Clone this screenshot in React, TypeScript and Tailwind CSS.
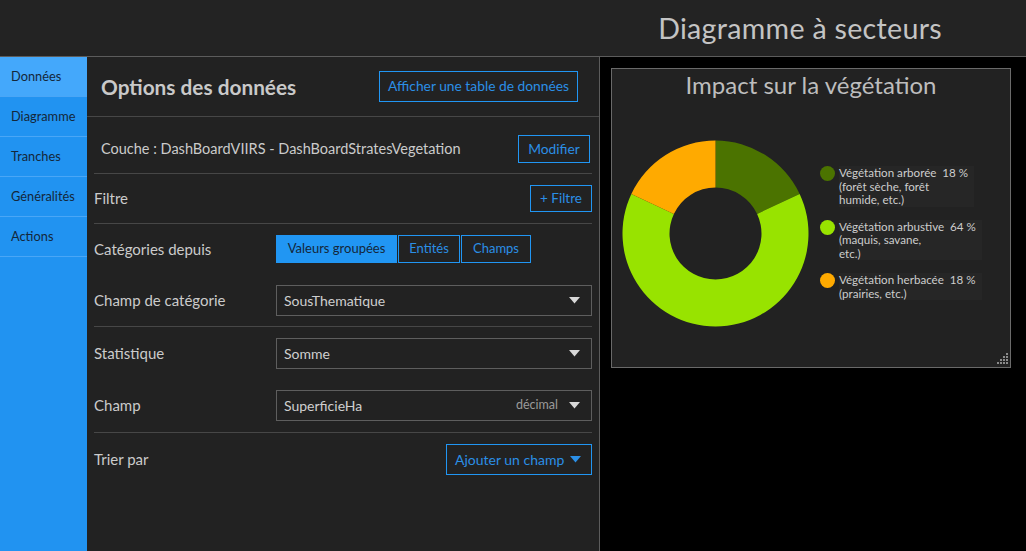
import React from "react";

const font = { fontFamily: "Lato, 'Open Sans', sans-serif" };

function Caret({ color = "#d8d8d8" }: { color?: string }) {
  return (
    <svg width="11" height="7" viewBox="0 0 11 7" className="shrink-0">
      <path d="M0 0 L11 0 L5.5 6.5 Z" fill={color} />
    </svg>
  );
}

function Select({ value, hint }: { value: string; hint?: string }) {
  return (
    <div className="flex h-[31px] w-[316px] items-center border border-[#5e5e5e] pl-[7px] pr-[11px]">
      <span className="flex-1 text-[14px] text-[#cfcfcf]">{value}</span>
      {hint && <span className="mr-[11px] text-[12.5px] text-[#9a9a9a]">{hint}</span>}
      <Caret />
    </div>
  );
}

function polar(cx: number, cy: number, r: number, frac: number) {
  const a = frac * Math.PI * 2;
  return [cx + r * Math.sin(a), cy - r * Math.cos(a)];
}

function arc(cx: number, cy: number, ro: number, ri: number, f0: number, f1: number) {
  const [x0, y0] = polar(cx, cy, ro, f0);
  const [x1, y1] = polar(cx, cy, ro, f1);
  const [x2, y2] = polar(cx, cy, ri, f1);
  const [x3, y3] = polar(cx, cy, ri, f0);
  const large = f1 - f0 > 0.5 ? 1 : 0;
  return `M${x0} ${y0} A${ro} ${ro} 0 ${large} 1 ${x1} ${y1} L${x2} ${y2} A${ri} ${ri} 0 ${large} 0 ${x3} ${y3} Z`;
}

function Donut() {
  const cx = 93.5, cy = 93.5, ro = 93, ri = 46;
  return (
    <svg width="187" height="187" viewBox="0 0 187 187" className="shrink-0">
      <path d={arc(cx, cy, ro, ri, 0, 0.18)} fill="#4b7300" />
      <path d={arc(cx, cy, ro, ri, 0.18, 0.82)} fill="#98e300" />
      <path d={arc(cx, cy, ro, ri, 0.82, 0.99999)} fill="#ffaa00" />
    </svg>
  );
}

function LegendItem({ color, lines, pct }: { color: string; lines: string[]; pct: string }) {
  return (
    <div className="flex items-start">
      <span className="mt-[0px] h-[15px] w-[15px] shrink-0 rounded-full" style={{ backgroundColor: color }} />
      <div className="ml-[4px] bg-[#262626] pr-[6px] text-[11.6px] leading-[13.5px] text-[#cdcdcd]">
        <div className="whitespace-pre">{lines[0] + "  " + pct}</div>
        {lines.slice(1).map((l) => (
          <div key={l}>{l}</div>
        ))}
      </div>
    </div>
  );
}

export default function App() {
  const navItems = ["Données", "Diagramme", "Tranches", "Généralités", "Actions"];
  return (
    <div className="flex h-[551px] w-[1026px] flex-col overflow-hidden bg-[#222222]" style={font}>
      <header className="flex h-[57px] shrink-0 items-center justify-end border-b border-[#5c5c5c] bg-[#232323] pr-[84px]">
        <h1 className="text-[28.6px] font-normal tracking-[0.3px] text-[#c4c4c4]">Diagramme à secteurs</h1>
      </header>
      <div className="flex min-h-0 flex-1">
        <nav className="flex w-[87px] shrink-0 flex-col bg-[#2193f1]">
          {navItems.map((n, i) => (
            <div
              key={n}
              className={
                "flex h-[40px] items-center border-b border-[#4aa6f6] pl-[11px] text-[12.8px] text-[#14273a] " +
                (i === 0 ? "bg-[#44a8fb]" : "")
              }
            >
              {n}
            </div>
          ))}
        </nav>
        <section className="flex w-[513px] shrink-0 flex-col border-r border-[#5c5c5c] bg-[#222222]">
          <div className="flex h-[60px] shrink-0 items-center justify-between border-b border-[#474747] pl-[14px] pr-[21px]">
            <h2 className="text-[20.8px] font-bold text-[#c9c9c9]">Options des données</h2>
            <button className="h-[31px] border border-[#2196f3] px-[8px] text-[13.8px] text-[#2b8fe6]">
              Afficher une table de données
            </button>
          </div>
          <div className="mx-[7px] flex flex-col">
            <div className="flex h-[57px] items-center justify-between border-b border-[#474747] pt-[8px] pl-[7px] pr-[2px]">
              <span className="text-[14.5px] text-[#cbcbcb]">Couche : DashBoardVIIRS - DashBoardStratesVegetation</span>
              <button className="h-[28px] w-[72px] border border-[#2196f3] text-[13.8px] text-[#2b8fe6]">Modifier</button>
            </div>
            <div className="flex h-[50px] items-center justify-between border-b border-[#474747]">
              <span className="text-[15px] text-[#cbcbcb]">Filtre</span>
              <button className="h-[27px] w-[62px] border border-[#2196f3] text-[13.5px] text-[#2b8fe6]">+ Filtre</button>
            </div>
            <div className="flex h-[50px] items-center">
              <span className="w-[182px] text-[15px] text-[#cbcbcb]">Catégories depuis</span>
              <div className="flex h-[28px]">
                <button className="h-full w-[121px] bg-[#2196f3] text-[13px] text-[#14273a]">Valeurs groupées</button>
                <button className="ml-[1px] h-full w-[62px] border border-[#2196f3] text-[13px] text-[#2b8fe6]">Entités</button>
                <button className="ml-[1px] h-full w-[70px] border border-[#2196f3] text-[13px] text-[#2b8fe6]">Champs</button>
              </div>
            </div>
            <div className="flex h-[53px] items-center border-b border-[#474747]">
              <span className="w-[182px] text-[15px] text-[#cbcbcb]">Champ de catégorie</span>
              <Select value="SousThematique" />
            </div>
            <div className="flex h-[52px] items-center">
              <span className="w-[182px] text-[15px] text-[#cbcbcb]">Statistique</span>
              <Select value="Somme" />
            </div>
            <div className="flex h-[54px] items-center border-b border-[#474747]">
              <span className="w-[182px] text-[15px] text-[#cbcbcb]">Champ</span>
              <Select value="SuperficieHa" hint="décimal" />
            </div>
            <div className="flex h-[53px] items-center justify-between">
              <span className="text-[15px] text-[#cbcbcb]">Trier par</span>
              <button className="flex h-[31px] w-[146px] items-center justify-between border border-[#2196f3] pl-[8px] pr-[10px] text-[14px] text-[#2b8fe6]">
                <span>Ajouter un champ</span>
                <Caret color="#2b8fe6" />
              </button>
            </div>
          </div>
        </section>
        <main className="flex-1 bg-black pl-[11px] pt-[11px]">
          <div className="relative flex h-[300px] w-[400px] flex-col border border-[#6a6a6a] bg-[#222222]">
            <div className="h-[32px] text-center text-[24px] leading-[32px] text-[#bdbdbd]">Impact sur la végétation</div>
            <div className="flex items-start">
              <div className="ml-[10px] mt-[39px]">
                <Donut />
              </div>
              <div className="ml-[11px] mt-[65px] flex flex-col gap-[13px]">
                <LegendItem color="#4b7300" pct="18 %" lines={["Végétation arborée", "(forêt sèche, forêt", "humide, etc.)"]} />
                <LegendItem color="#98e300" pct="64 %" lines={["Végétation arbustive", "(maquis, savane,", "etc.)"]} />
                <LegendItem color="#ffaa00" pct="18 %" lines={["Végétation herbacée", "(prairies, etc.)"]} />
              </div>
            </div>
            <svg width="12" height="12" viewBox="0 0 12 12" className="absolute bottom-[2px] right-[1px]">
              {[
                [9, 0],
                [6, 3], [9, 3],
                [3, 6], [6, 6], [9, 6],
                [0, 9], [3, 9], [6, 9], [9, 9],
              ].map(([x, y], i) => (
                <rect key={i} x={x} y={y} width="2" height="2" fill="#8a8a8a" />
              ))}
            </svg>
          </div>
        </main>
      </div>
    </div>
  );
}
